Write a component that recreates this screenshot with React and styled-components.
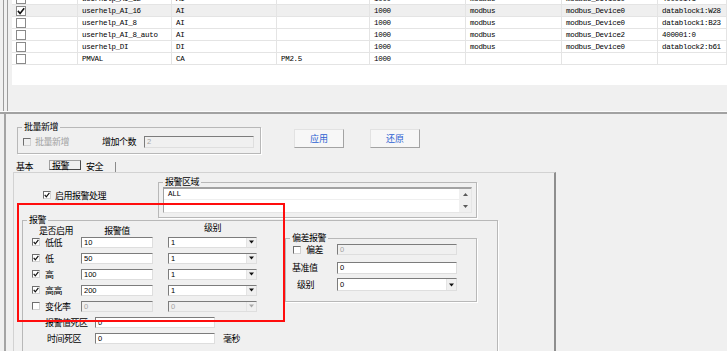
import React from "react";
import styled, { createGlobalStyle } from "styled-components";

const UI_FONT = `"Noto Sans CJK SC", "Noto Sans CJK JP", sans-serif`;
const MONO = `"Liberation Mono", "DejaVu Sans Mono", monospace`;
const SANS = `"Liberation Sans", Arial, sans-serif`;

const GlobalStyle = createGlobalStyle`
  html, body { margin: 0; padding: 0; background: #f0f0f0; }
  body { font-family: ${UI_FONT}; }
`;

const Page = styled.div`
  position: relative;
  width: 727px;
  height: 351px;
  overflow: hidden;
  background: #f0f0f0;
  display: flex;
  flex-direction: column;
  font-family: ${UI_FONT};
  font-size: 9px;
  letter-spacing: -0.5px;
  color: #000;
`;

/* ---------- top list ---------- */

const TopPane = styled.div`
  display: flex;
  height: 111px;
  flex: none;
`;

const LeftRail = styled.div`
  flex: none;
  width: 3px;
  margin: 0 4px 0 3px;
  border-left: 1px solid #9c9c9c;
  border-right: 1px solid #9c9c9c;
`;

const ListArea = styled.div`
  flex: 1;
  display: flex;
  flex-direction: column;
`;

const ListBox = styled.div`
  height: 85px;
  background: #fff;
  overflow: hidden;
`;

const Rows = styled.div`
  margin-top: -7px;
`;

const Row = styled.div`
  display: grid;
  grid-template-columns: 66px 94px 105px 93px 96px 96px 96px 1fr;
  height: 12px;
  box-sizing: border-box;
  border-bottom: 1px solid #e4e4e4;
  background: ${(p) => (p.$selected ? "#efefef" : "#fff")};
`;

const Cell = styled.div`
  display: flex;
  align-items: center;
  padding-left: 4px;
  border-right: 1px solid #e4e4e4;
  font-family: ${MONO};
  font-size: 7.5px;
  letter-spacing: -0.3px;
  white-space: nowrap;
  overflow: hidden;
`;

const Separator = styled.div`
  flex: none;
  height: 2px;
  background: #a2a2a2;
  border-top: 1px solid #fbfbfb;
`;

/* ---------- lower form ---------- */

const LowerPane = styled.div`
  flex: 1;
  min-height: 0;
  margin-left: 4px;
  border-left: 2px solid #a4a4a4;
  padding-left: 7px;
  display: flex;
  flex-direction: column;
`;

const Group = styled.fieldset`
  margin: 0;
  padding: 0;
  min-width: 0;
  box-sizing: border-box;
  border: 1px solid #b8b8b8;
  box-shadow: 1px 1px 0 #fff;
  flex: none;
`;

const Legend = styled.legend`
  margin-left: 4px;
  padding: 0 2px;
  line-height: 10px;
  font-size: 9px;
`;

const BatchRow = styled.div`
  display: flex;
  align-items: flex-start;
  margin: 8px 0 0 4px;
`;

const BatchGroup = styled(Group)`
  width: 244px;
`;

const BatchBody = styled.div`
  display: flex;
  align-items: center;
  height: 21px;
  padding-left: 5px;
  padding-bottom: 2px;
  box-sizing: border-box;
`;

const Label = styled.span`
  white-space: nowrap;
  color: ${(p) => (p.$muted ? "#a3a3a3" : "#000")};
  margin-left: ${(p) => p.$left || 0}px;
  margin-right: ${(p) => p.$right || 0}px;
`;

const Button = styled.div`
  flex: none;
  width: 50px;
  height: 19px;
  box-sizing: border-box;
  margin: 7px 0 0 ${(p) => p.$left}px;
  display: flex;
  align-items: center;
  justify-content: center;
  background: #f7f7f7;
  border: 1px solid;
  border-color: #e2e2e2 #a3a3a3 #a3a3a3 #e2e2e2;
  color: #2d5fd2;
  letter-spacing: 0;
`;

const TabRow = styled.div`
  display: flex;
  align-items: flex-end;
  height: 12px;
  margin-top: 6px;
  flex: none;
`;

const Tab = styled.div`
  box-sizing: border-box;
  height: 10px;
  width: ${(p) => p.$width}px;
  margin-left: ${(p) => p.$left || 0}px;
  margin-bottom: ${(p) => (p.$active ? 2 : 0)}px;
  padding-left: ${(p) => p.$pad}px;
  line-height: 9px;
  border: ${(p) => (p.$active ? "1px solid" : "none")};
  border-color: #a0a0a0 #4a4a4a #4a4a4a #a0a0a0;
  border-right: ${(p) => (p.$last ? "1px solid #8a8a8a" : undefined)};
`;

const TabPanel = styled.div`
  flex: 1;
  width: 543px;
  box-sizing: border-box;
  border-top: 1px solid #d2d2d2;
  border-left: 1px solid #d2d2d2;
  border-right: 2px solid #8e8e8e;
  display: flex;
  flex-direction: column;
  min-height: 0;
`;

const PanelTop = styled.div`
  display: flex;
  align-items: flex-start;
  padding-top: 4px;
  flex: none;
`;

const EnableLine = styled.div`
  flex: none;
  width: 144px;
  box-sizing: border-box;
  padding-left: 29px;
  margin-top: 13px;
  display: flex;
  align-items: center;
  height: 10px;
`;

const AreaGroup = styled(Group)`
  width: 319px;
  height: 41px;
`;

const AreaBox = styled.div`
  display: flex;
  width: 309px;
  height: 26px;
  margin-left: 4px;
  box-sizing: border-box;
  background: #fff;
  border-top: 2px solid #a2a2a2;
  border-left: 1px solid #a2a2a2;
  border-right: 1px solid #e6e6e6;
  border-bottom: 1px solid #e6e6e6;
`;

const AreaText = styled.div`
  flex: 1;
  height: 10px;
  padding-left: 4px;
  border-bottom: 1px solid #efefef;
  font-family: ${MONO};
  font-size: 7.5px;
  letter-spacing: -0.3px;
  line-height: 10px;
`;

const ScrollBar = styled.div`
  flex: none;
  width: 12px;
  background: #f0f0f0;
  display: flex;
  flex-direction: column;
  justify-content: space-around;
  align-items: center;
`;

const AlarmGroup = styled(Group)`
  width: 476px;
  height: 160px;
  margin: -3px 0 0 8px;
`;

const AlarmBody = styled.div`
  display: flex;
  align-items: flex-start;
`;

const AlarmTable = styled.div`
  flex: none;
  padding-left: 9px;
`;

const AlarmGrid = styled.div`
  display: grid;
  grid-template-columns: 49px 72px 15px 89px;
  grid-template-rows: 9px;
  grid-auto-rows: 16px;
  align-items: center;
`;

const HeadCell = styled.div`
  height: 9px;
  line-height: 9px;
  text-align: ${(p) => (p.$center ? "center" : "left")};
  padding-left: ${(p) => p.$pad || 0}px;
  margin-top: ${(p) => p.$shift || 0}px;
  grid-column: ${(p) => p.$col};
  align-self: start;
`;

const CheckCell = styled.div`
  display: flex;
  align-items: center;
  gap: 5px;
  white-space: nowrap;
`;

const DeadGrid = styled.div`
  display: grid;
  grid-template-columns: 63px 120px auto;
  grid-auto-rows: 16px;
  align-items: center;
`;

const DeadLabel = styled.div`
  padding-left: ${(p) => p.$pad}px;
  white-space: nowrap;
`;

const Unit = styled.div`
  padding-left: 8px;
`;

const DevGroup = styled(Group)`
  width: 192px;
  height: 69px;
  margin: 8px 0 0 28px;
`;

const DevRow = styled.div`
  display: grid;
  grid-template-columns: 51px 120px;
  align-items: center;
  height: ${(p) => p.$h}px;
  margin-top: ${(p) => p.$top}px;
`;

const DevLabel = styled.div`
  display: flex;
  align-items: center;
  gap: 5px;
  padding-left: ${(p) => p.$pad}px;
  white-space: nowrap;
`;

const Field = styled.div`
  box-sizing: border-box;
  width: ${(p) => p.$width}px;
  height: ${(p) => p.$height || 11}px;
  padding-left: 2px;
  display: flex;
  align-items: center;
  background: ${(p) => (p.$disabled ? "#f0f0f0" : "#fff")};
  color: ${(p) => (p.$disabled ? "#a3a3a3" : "#000")};
  border: 1px solid;
  border-color: #7c7c7c #dedede #dedede #7c7c7c;
  font-family: ${SANS};
  font-size: 7.5px;
  letter-spacing: 0;
  overflow: hidden;
  white-space: nowrap;
`;

const SelectBox = styled(Field)`
  padding-left: 0;
`;

const SelectValue = styled.div`
  flex: 1;
  padding-left: 2px;
`;

const DropButton = styled.div`
  flex: none;
  width: 9px;
  height: 100%;
  display: flex;
  align-items: center;
  justify-content: center;
  background: #f0f0f0;
  border-left: 1px solid #e4e4e4;
`;

const CheckBox = styled.span`
  flex: none;
  display: inline-flex;
  align-items: center;
  justify-content: center;
  box-sizing: border-box;
  width: ${(p) => p.$size}px;
  height: ${(p) => p.$size}px;
  background: ${(p) => (p.$disabled ? "#f0f0f0" : "#fff")};
  border: 1px solid;
  border-color: ${(p) =>
    p.$flat ? "#8a8a8a" : "#6e6e6e #d2d2d2 #d2d2d2 #6e6e6e"};
`;

const Highlight = styled.div`
  position: absolute;
  left: 17px;
  top: 203px;
  width: 268px;
  height: 119px;
  box-sizing: border-box;
  border: 2px solid #ff0d0d;
  pointer-events: none;
`;

const Check = ({ checked, size = 8, flat, disabled }) => (
  <CheckBox $size={size} $flat={flat} $disabled={disabled}>
    {checked && (
      <svg width={size - 2} height={size - 2} viewBox="0 0 6 6">
        <path d="M0.7 2.9 L2.3 4.8 L5.4 0.9" fill="none" stroke="#111" strokeWidth="1.2" />
      </svg>
    )}
  </CheckBox>
);

const Select = ({ value, width, height, disabled }) => (
  <SelectBox $width={width} $height={height} $disabled={disabled}>
    <SelectValue>{value}</SelectValue>
    <DropButton>
      <svg width="5" height="4" viewBox="0 0 5 4">
        <path d="M0 0.5H5L2.5 3.5Z" fill={disabled ? "#a8a8a8" : "#111"} />
      </svg>
    </DropButton>
  </SelectBox>
);

const Arrow = ({ up }) => (
  <svg width="5" height="3" viewBox="0 0 5 3">
    <path d={up ? "M0 3H5L2.5 0Z" : "M0 0H5L2.5 3Z"} fill="#5a5a5a" />
  </svg>
);

const tags = [
  { name: "userhelp_AI_12", type: "AI", desc: "", rate: "1000", drv: "modbus", dev: "modbus_Device0", addr: "400001:1" },
  { name: "userhelp_AI_16", type: "AI", desc: "", rate: "1000", drv: "modbus", dev: "modbus_Device0", addr: "datablock1:W28", checked: true, selected: true },
  { name: "userhelp_AI_8", type: "AI", desc: "", rate: "1000", drv: "modbus", dev: "modbus_Device0", addr: "datablock1:B23" },
  { name: "userhelp_AI_8_auto", type: "AI", desc: "", rate: "1000", drv: "modbus", dev: "modbus_Device2", addr: "400001:0" },
  { name: "userhelp_DI", type: "DI", desc: "", rate: "1000", drv: "modbus", dev: "modbus_Device0", addr: "datablock2:b61" },
  { name: "PMVAL", type: "CA", desc: "PM2.5", rate: "1000", drv: "", dev: "", addr: "" },
];

const limits = [
  { label: "低低", value: "10", level: "1", on: true },
  { label: "低", value: "50", level: "1", on: true },
  { label: "高", value: "100", level: "1", on: true },
  { label: "高高", value: "200", level: "1", on: true },
  { label: "变化率", value: "0", level: "0", on: false, disabled: true },
];

const renderTag = (t) => (
  <Row key={t.name} $selected={t.selected}>
    <Cell><Check size={10} flat checked={t.checked} /></Cell>
    <Cell>{t.name}</Cell>
    <Cell>{t.type}</Cell>
    <Cell>{t.desc}</Cell>
    <Cell>{t.rate}</Cell>
    <Cell>{t.drv}</Cell>
    <Cell>{t.dev}</Cell>
    <Cell>{t.addr}</Cell>
  </Row>
);

const renderLimit = (l) => (
  <React.Fragment key={l.label}>
    <CheckCell><Check checked={l.on} />{l.label}</CheckCell>
    <Field $width={72} $disabled={l.disabled}>{l.value}</Field>
    <div />
    <Select width={89} value={l.level} disabled={l.disabled} />
  </React.Fragment>
);

export default function App() {
  return (
    <Page>
      <GlobalStyle />
      <TopPane>
        <LeftRail />
        <ListArea>
          <ListBox>
            <Rows>{tags.map(renderTag)}</Rows>
          </ListBox>
        </ListArea>
      </TopPane>
      <Separator />
      <LowerPane>
        <BatchRow>
          <BatchGroup>
            <Legend>批量新增</Legend>
            <BatchBody>
              <Check disabled />
              <Label $muted $left={4}>批量新增</Label>
              <Label $left={33} $right={8}>增加个数</Label>
              <Field $width={110} $height={12} $disabled>2</Field>
            </BatchBody>
          </BatchGroup>
          <Button $left={33}>应用</Button>
          <Button $left={26}>还原</Button>
        </BatchRow>
        <TabRow>
          <Tab $width={36} $pad={3}>基本</Tab>
          <Tab $width={32} $pad={2} $active>报警</Tab>
          <Tab $width={34} $pad={4} $left={1} $last>安全</Tab>
        </TabRow>
        <TabPanel>
          <PanelTop>
            <EnableLine>
              <Check checked />
              <Label $left={4}>启用报警处理</Label>
            </EnableLine>
            <AreaGroup>
              <Legend>报警区域</Legend>
              <AreaBox>
                <AreaText>ALL</AreaText>
                <ScrollBar>
                  <Arrow up />
                  <Arrow />
                </ScrollBar>
              </AreaBox>
            </AreaGroup>
          </PanelTop>
          <AlarmGroup>
            <Legend>报警</Legend>
            <AlarmBody>
              <AlarmTable>
                <AlarmGrid>
                  <HeadCell $col={1} $pad={7} $shift={1}>是否启用</HeadCell>
                  <HeadCell $col={2} $center $shift={1}>报警值</HeadCell>
                  <HeadCell $col={4} $center $shift={-2}>级别</HeadCell>
                  {limits.map(renderLimit)}
                </AlarmGrid>
                <DeadGrid>
                  <DeadLabel $pad={13}>报警值死区</DeadLabel>
                  <Field $width={120}>0</Field>
                  <div />
                  <DeadLabel $pad={15}>时间死区</DeadLabel>
                  <Field $width={120}>0</Field>
                  <Unit>毫秒</Unit>
                </DeadGrid>
              </AlarmTable>
              <DevGroup>
                <Legend>偏差报警</Legend>
                <DevRow $h={11} $top={0}>
                  <DevLabel $pad={7}><Check />偏差</DevLabel>
                  <Field $width={120} $disabled>0</Field>
                </DevRow>
                <DevRow $h={12} $top={7}>
                  <DevLabel $pad={6}>基准值</DevLabel>
                  <Field $width={120} $height={12}>0</Field>
                </DevRow>
                <DevRow $h={13} $top={5}>
                  <DevLabel $pad={11}>级别</DevLabel>
                  <Select width={120} height={13} value="0" />
                </DevRow>
              </DevGroup>
            </AlarmBody>
          </AlarmGroup>
        </TabPanel>
      </LowerPane>
      <Highlight />
    </Page>
  );
}
